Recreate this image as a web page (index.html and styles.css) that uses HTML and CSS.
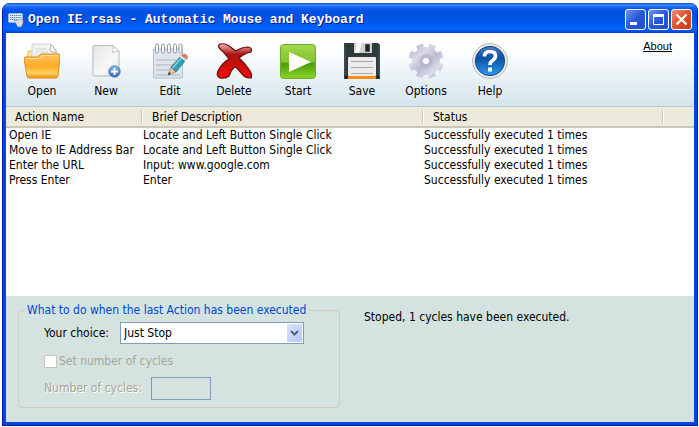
FILE: index.html
```html
<!DOCTYPE html>
<html lang="en">
<head>
    <meta charset="UTF-8">
    <meta name="viewport" content="width=device-width, initial-scale=1.0">
    <title>Open IE.rsas - Automatic Mouse and Keyboard</title>
    <link rel="stylesheet" href="styles.css">
</head>
<body>
    <div class="window">
        <header class="titlebar">
            <svg class="app-icon" width="16" height="16" viewBox="0 0 16 16">
                <rect x="0.5" y="1.5" width="14" height="9" rx="1" fill="#e6edf8" stroke="#9db7d8"/>
                <path d="M2 3.5h12M2 5.5h12M2 7.5h8" stroke="#4e86c4" stroke-dasharray="1.4 0.6"/>
                <path d="M6 8l3 1 2-2 4 1v3l-2 4h-3l-2-3z" fill="#ddd" stroke="#888" stroke-width="0.6"/>
            </svg>
            <h1>Open IE.rsas - Automatic Mouse and Keyboard</h1>
            <div class="window-buttons">
                <button type="button" aria-label="Minimize">
                    <svg width="19" height="19"><path d="M4 13.5h7" stroke="#fff" stroke-width="3"/></svg>
                </button>
                <button type="button" aria-label="Maximize">
                    <svg width="19" height="19"><path d="M4 5.5h11" stroke="#fff" stroke-width="3"/><path d="M4.5 5v9.500h10V5" fill="none" stroke="#fff"/></svg>
                </button>
                <button type="button" class="close" aria-label="Close">
                    <svg width="19" height="19"><path d="M4.500 4.500l10 10M14.500 4.500l-10 10" stroke="#fff" stroke-width="2.200"/></svg>
                </button>
            </div>
        </header>

        <nav class="toolbar">
            <button type="button">
                <svg width="36" height="36" viewBox="0 0 36 36">
                    <defs>
                        <linearGradient id="folder" x2="0" y2="1"><stop offset="0" stop-color="#ffc861"/><stop offset="0.5" stop-color="#ffa928"/><stop offset="0.8" stop-color="#ffd060"/><stop offset="1" stop-color="#ef9010"/></linearGradient>
                    </defs>
                    <path d="M4 8h8l2-2h14v16H4z" fill="#fbe3ac" stroke="#e8b860"/>
                    <path d="M8 1h19l5 6v16H8z" fill="#f2f2f2" stroke="#d0d0d0"/>
                    <path d="M27 1l-1 7 7 2z" fill="#fff" stroke="#b8b8b8"/>
                    <path d="M11 6h11M11 9h13M11 12h16" stroke="#d4d4d4"/>
                    <path d="M1 14h13l3-3h18q1 0 1 2l-2 20q0 2-2 2H5q-2 0-2-2L0 16q0-2 1-2z" fill="url(#folder)" stroke="#e28a13"/>
                    <path d="M2 15.500h13l3-3h16" fill="none" stroke="#ffe0a0"/>
                </svg>
                <span>Open</span>
            </button>
            <button type="button">
                <svg width="36" height="36" viewBox="0 0 36 36">
                    <defs>
                        <linearGradient id="sheet" x2="1" y2="1"><stop offset="0" stop-color="#e4e5e6"/><stop offset="0.6" stop-color="#f8f8f8"/><stop offset="1" stop-color="#dedfe0"/></linearGradient>
                        <linearGradient id="plus" x2="0" y2="1"><stop offset="0" stop-color="#8fb8e8"/><stop offset="1" stop-color="#2d63b0"/></linearGradient>
                    </defs>
                    <path d="M7 2.500h18l6 6V31q0 2-2 2H7q-2 0-2-2V4.500q0-2 2-2z" fill="url(#sheet)" stroke="#b6b8ba"/>
                    <path d="M25 2.500q1 4-1 7 4-2 7-1z" fill="#fff" stroke="#c8c8c8"/>
                    <circle cx="26.500" cy="28.500" r="5.700" fill="url(#plus)" stroke="#5685c4"/>
                    <path d="M26.500 25v7M23 28.500h7" stroke="#fff" stroke-width="2"/>
                </svg>
                <span>New</span>
            </button>
            <button type="button">
                <svg width="36" height="36" viewBox="0 0 36 36">
                    <path d="M1.500 6h29v29h-29z" fill="#dfe5eb" stroke="#b5bfc9"/>
                    <path d="M4 17h20M4 22h18M4 27h22M4 32h24" stroke="#a9b6c3"/>
                    <g fill="#f4f6f8" stroke="#8e9aa6">
                        <rect x="3.500" y="1" width="3" height="9" rx="1.500"/><rect x="9.500" y="1" width="3" height="9" rx="1.500"/><rect x="15.500" y="1" width="3" height="9" rx="1.500"/><rect x="21.500" y="1" width="3" height="9" rx="1.500"/><rect x="27" y="1" width="3" height="9" rx="1.500"/>
                    </g>
                    <path d="M16 32l3-8 5 5z" fill="#f2c48b" stroke="#997550" stroke-width="0.6"/>
                    <path d="M16 32l1-3 2 2z" fill="#333"/>
                    <path d="M19 24l9-10 5 4-9 11z" fill="#2d9fb4" stroke="#1d7386" stroke-width="0.7"/>
                    <path d="M20.500 25l9-10" stroke="#84d0dc" stroke-width="1.500"/>
                    <path d="M28 14l1.500-1.500 5 4L33 18z" fill="#e0e4e6"/>
                    <path d="M29.500 12.500q2-2.500 4.500-1 3 2 .500 5z" fill="#e0806a" stroke="#b86050" stroke-width="0.5"/>
                </svg>
                <span>Edit</span>
            </button>
            <button type="button">
                <svg width="36" height="36" viewBox="0 0 36 36">
                    <defs>
                        <linearGradient id="cross" x2="0" y2="1"><stop offset="0" stop-color="#f0b8b0"/><stop offset="0.3" stop-color="#a81814"/><stop offset="0.55" stop-color="#c4100c"/><stop offset="1" stop-color="#f40c0c"/></linearGradient>
                    </defs>
                    <path d="M4 1q5-1 9 2l7 5q6-4 12-4 5 1 3 5-6 1-12 6 6 5 11 13 3 5 1 7-5 0-8-3l-8-9q-4 4-6 10-3 3-9 2-4-2-2-7 4-8 11-12Q8 9 4 6 1 3 4 1z" fill="url(#cross)" stroke="#6d0805" stroke-width="1.200"/>
                </svg>
                <span>Delete</span>
            </button>
            <button type="button">
                <svg width="36" height="36" viewBox="0 0 36 36">
                    <defs>
                        <linearGradient id="start" x2="0" y2="1"><stop offset="0" stop-color="#a8d854"/><stop offset="0.52" stop-color="#7cbf20"/><stop offset="0.55" stop-color="#4b9c0c"/><stop offset="1" stop-color="#8ed62c"/></linearGradient>
                    </defs>
                    <rect x="0.5" y="1.500" width="35" height="34" rx="3" fill="url(#start)" stroke="#6bab28"/>
                    <path d="M1 18q17 6 34-1v-6H1z" fill="#8ac93c" opacity="0.6"/>
                    <path d="M9 9l22 10L9 29z" fill="#fff"/>
                </svg>
                <span>Start</span>
            </button>
            <button type="button">
                <svg width="36" height="36" viewBox="0 0 36 36">
                    <path d="M0 0h34l2 2v34H0z" fill="#2d3b3c"/>
                    <path d="M1 1v34M35 3v32" stroke="#4d5b5b"/>
                    <path d="M10 0h18v10H10z" fill="#d2d2d2"/>
                    <path d="M13 0h5l-3 10h-4z" fill="#f8f8f8"/>
                    <rect x="21.500" y="1.500" width="4" height="7" fill="#2a2020" stroke="#555"/>
                    <rect x="4" y="14" width="28" height="19" rx="1" fill="#ececec"/>
                    <path d="M4 33h28v3H4z" fill="#f58c1c"/>
                    <path d="M7 18.500h22M7 24.500h22M7 30.500h22" stroke="#a8a8a8"/>
                    <path d="M1 33h2v2H1zM33 33h2v2h-2z" fill="#111"/>
                </svg>
                <span>Save</span>
            </button>
            <button type="button">
                <svg width="36" height="36" viewBox="0 0 36 36">
                    <defs>
                        <linearGradient id="gear" gradientUnits="userSpaceOnUse" x1="4" y1="2" x2="32" y2="34"><stop offset="0" stop-color="#b4b4cc"/><stop offset="0.3" stop-color="#dadae8"/><stop offset="0.55" stop-color="#bcbcd2"/><stop offset="0.8" stop-color="#dcdcea"/><stop offset="1" stop-color="#b0b0c8"/></linearGradient>
                    </defs>
                    <circle cx="18" cy="18" r="14" fill="url(#gear)"/>
                    <g stroke="url(#gear)" stroke-width="7">
                        <path d="M11.300 1.800L24.700 34.200M1.800 11.300L34.200 24.700M1.800 24.700L34.200 11.300M11.300 34.200L24.700 1.800"/>
                    </g>
                    <circle cx="18" cy="18" r="7" fill="#b0b0c6" opacity="0.5"/>
                    <circle cx="18" cy="18" r="3" fill="#fff"/>
                </svg>
                <span>Options</span>
            </button>
            <button type="button">
                <svg width="36" height="36" viewBox="0 0 36 36">
                    <defs>
                        <linearGradient id="help" x2="0" y2="1"><stop offset="0" stop-color="#4a7fc0"/><stop offset="0.4" stop-color="#0c50a4"/><stop offset="1" stop-color="#2c9cf0"/></linearGradient>
                    </defs>
                    <circle cx="18" cy="18" r="17.300" fill="#f2f2f2" stroke="#b0b0b0"/>
                    <circle cx="18" cy="18" r="14.700" fill="url(#help)" stroke="#16457c"/>
                    <path d="M12.500 13.500q0-5 5.500-5t5.500 4.500q0 2.500-3 4.500-2.500 1.500-2.500 4.500" fill="none" stroke="#fff" stroke-width="3.600"/>
                    <rect x="16" y="24.500" width="4" height="4" fill="#fff"/>
                </svg>
                <span>Help</span>
            </button>
            <a href="#" class="about">About</a>
        </nav>

        <main class="actions">
            <table>
                <colgroup>
                    <col class="col-name">
                    <col class="col-description">
                    <col>
                    <col class="col-end">
                </colgroup>
                <thead>
                    <tr>
                        <th>Action Name</th>
                        <th>Brief Description</th>
                        <th>Status</th>
                        <th></th>
                    </tr>
                </thead>
                <tbody>
                    <tr>
                        <td>Open IE</td>
                        <td>Locate and Left Button Single Click</td>
                        <td>Successfully executed 1 times</td>
                        <td></td>
                    </tr>
                    <tr>
                        <td>Move to IE Address Bar</td>
                        <td>Locate and Left Button Single Click</td>
                        <td>Successfully executed 1 times</td>
                        <td></td>
                    </tr>
                    <tr>
                        <td>Enter the URL</td>
                        <td>Input: www.google.com</td>
                        <td>Successfully executed 1 times</td>
                        <td></td>
                    </tr>
                    <tr>
                        <td>Press Enter</td>
                        <td>Enter</td>
                        <td>Successfully executed 1 times</td>
                        <td></td>
                    </tr>
                </tbody>
            </table>
        </main>

        <footer class="panel">
            <fieldset>
                <legend>What to do when the last Action has been executed</legend>
                <div class="row">
                    <label for="choice" class="choice-label">Your choice:</label>
                    <div class="select-box">
                        <select id="choice">
                            <option>Just Stop</option>
                        </select>
                        <svg class="arrow" width="15" height="18" viewBox="0 0 15 18"><path d="M4 7l3.500 3.500L11 7" fill="none" stroke="#4d6185" stroke-width="2"/></svg>
                    </div>
                </div>
                <div class="row check-row">
                    <input type="checkbox" id="setCycles" disabled>
                    <label for="setCycles">Set number of cycles</label>
                </div>
                <div class="row">
                    <label for="cycles" class="cycles-label">Number of cycles:</label>
                    <input type="text" id="cycles" disabled>
                </div>
            </fieldset>
            <p class="status">Stoped, 1 cycles have been executed.</p>
        </footer>
    </div>
</body>
</html>
```
FILE: styles.css
```css
* {
    box-sizing: border-box;
}

body {
    margin: 0;
    padding: 3px 1px 1px 2px;
    height: 100vh;
    background-color: #fff;
    font-family: "DejaVu Sans Condensed", Tahoma, sans-serif;
    font-size: 12px;
    line-height: 15px;
    color: #000;
}

button, select, input {
    font: inherit;
    color: inherit;
}

.window {
    display: flex;
    flex-direction: column;
    height: 100%;
    border-radius: 8px 8px 0 0;
    background-color: #0046e0;
    border: solid #0019a8;
    border-width: 0 1px 1px;
    padding: 0 3px 3px;
    overflow: hidden;
}

/* Title bar */
.titlebar {
    display: flex;
    align-items: center;
    flex: none;
    height: 30px;
    margin: 0 -3px;
    padding: 3px 5px 0;
    background: linear-gradient(#0a50c8 0, #3c8cff 2px, #0a5cec 5px, #0050e0 10px, #0058ee 20px, #0066ff 26px, #0040c8 30px);
}

.titlebar h1 {
    flex: 1;
    margin: 0 0 0 4px;
    font: bold 13px "Liberation Mono", monospace;
    color: #fff;
    text-shadow: 1px 1px #0a1883;
    white-space: nowrap;
}

.window-buttons {
    display: flex;
    gap: 2px;
}

.window-buttons button {
    width: 21px;
    height: 21px;
    padding: 0;
    border: 1px solid #fff;
    border-radius: 3px;
    background: linear-gradient(135deg, #6b94f0, #2858d8 50%, #2050c8);
}

.window-buttons button.close {
    background: linear-gradient(135deg, #f09070, #e05028 50%, #c03c10);
}

.window-buttons svg {
    display: block;
}

/* Toolbar */
.toolbar {
    display: flex;
    flex: none;
    height: 74px;
    padding: 10px 22px 0 4px;
    background: linear-gradient(#fff 20%, #d4e4ec);
    border-bottom: 1px solid #b8ccd8;
}

.toolbar button {
    display: flex;
    flex-direction: column;
    align-items: center;
    gap: 5px;
    width: 64px;
    padding: 0;
    border: none;
    background: none;
}

.about {
    margin: -3px 0 0 auto;
    font: 11px "Liberation Sans", Arial, sans-serif;
    color: #000;
}

/* Action list */
.actions {
    flex: 1;
    background-color: #fff;
}

table {
    width: 100%;
    table-layout: fixed;
    border-collapse: collapse;
}

.col-name {
    width: 137px;
}

.col-description {
    width: 281px;
}

.col-end {
    width: 30px;
}

th {
    height: 20px;
    padding: 2px 0 0 9px;
    font-weight: normal;
    text-align: left;
    background: linear-gradient(90deg, #c7c5b2 50%, #fff 50%) right center / 2px 13px no-repeat, #ebeadb;
    border-bottom: 2px solid #cbc7b8;
}

th:last-child {
    background: #ebeadb;
}

td {
    padding: 0;
    white-space: nowrap;
}

td:first-child {
    padding-left: 3px;
}

/* Bottom panel */
.panel {
    display: flex;
    flex: none;
    gap: 24px;
    padding: 7px 12px 14px;
    background-color: #d4e3e0;
}

fieldset {
    width: 322px;
    min-width: 0;
    margin: 0;
    padding: 4px 0 7px 25px;
    border: 1px solid #cdcdbc;
    border-radius: 4px;
}

legend {
    margin-left: -19px;
    padding: 0 2px;
    color: #0046d5;
    white-space: nowrap;
}

.row {
    display: flex;
    align-items: center;
    gap: 8px;
}

.choice-label {
    width: 68px;
}

.select-box {
    position: relative;
    width: 184px;
}

select {
    display: block;
    width: 100%;
    height: 22px;
    padding: 0 3px;
    appearance: none;
    background-color: #fff;
    border: 1px solid #7f9db9;
    border-radius: 0;
}

.arrow {
    position: absolute;
    top: 2px;
    right: 2px;
    background: linear-gradient(135deg, #d8e4ff, #b4c8f6);
    border-radius: 1px;
    pointer-events: none;
}

.check-row {
    gap: 2px;
    margin: 10px 0 8px;
    color: #a7a695;
}

input[type="checkbox"] {
    width: 13px;
    height: 13px;
    margin: 0;
    appearance: none;
    background-color: #fff;
    border: 1px solid #cac8bb;
}

.cycles-label {
    width: 99px;
    color: #a7a695;
    text-shadow: 1px 1px #fff;
}

input[type="text"] {
    width: 60px;
    height: 23px;
    background: none;
    border: 1px solid #7f9db9;
}

.status {
    margin: 7px 0 0;
}
```
